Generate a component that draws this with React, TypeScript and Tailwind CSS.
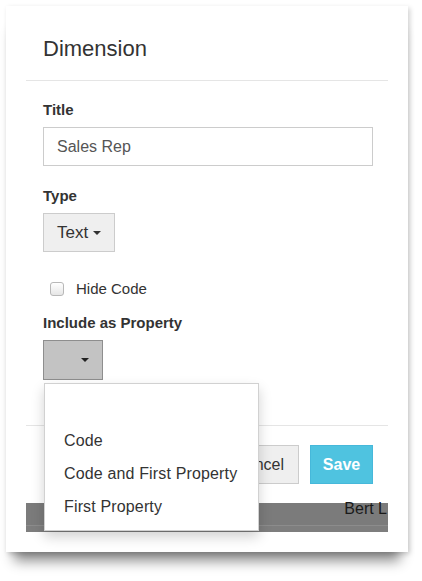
const caret = 'inline-block w-0 h-0 border-x-[4px] border-x-transparent border-t-[4px]'

function App() {
  const options = ['', 'Code', 'Code and First Property', 'First Property']

  return (
    <div className="w-[422px] h-[581px] bg-white pl-[6px] pt-[6px] font-['Liberation_Sans',Arial,sans-serif] text-[#333]">
      <div className="w-[402px] h-[546px] bg-white px-[20px] shadow-[2px_2px_5px_rgba(0,0,0,0.18),0_17px_12px_-8px_rgba(0,0,0,0.45)]">
        <section className="flex flex-col">
          <header className="pl-[17px] pt-[32px] pb-[20px] border-b border-[#e5e5e5]">
            <h4 className="text-[22px] leading-[22px]">Dimension</h4>
          </header>

          <form className="flex flex-col pl-[17px] pr-[15px] pt-[19px] pb-[45px]">
            <label className="text-[15px] leading-[20px] font-bold mb-[7px]">Title</label>
            <input
              defaultValue="Sales Rep"
              className="h-[39px] w-full border border-[#ccc] px-[13px] text-[16px] text-[#555] focus:outline-none"
            />

            <label className="text-[15px] leading-[20px] font-bold mt-[20px] mb-[7px]">Type</label>
            <button
              type="button"
              className="h-[39px] w-[72px] flex items-center gap-[5px] pl-[13px] border border-[#ccc] bg-[#efefef] text-[17px]"
            >
              Text
              <span className={`${caret} border-t-[#333]`} />
            </button>

            <div className="flex items-center gap-[12px] pl-[7px] mt-[27px] h-[20px]">
              <span className="w-[14px] h-[14px] rounded-[3px] border border-[#b8b8b8] bg-gradient-to-b from-white to-[#e6e6e6]" />
              <span className="text-[15px] leading-[20px]">Hide Code</span>
            </div>

            <label className="text-[15px] leading-[20px] font-bold mt-[14px] mb-[7px]">Include as Property</label>
            <div className="relative">
              <button
                type="button"
                className="h-[40px] w-[60px] flex items-center justify-end pr-[13px] border border-[#8e8e8e] bg-[#c3c3c3]"
              >
                <span className={`${caret} border-t-[#222]`} />
              </button>
              <ul className="absolute left-[1px] top-[43px] z-10 w-[215px] py-[7px] bg-white border border-[rgba(0,0,0,0.18)] shadow-[0_6px_12px_rgba(0,0,0,0.18)]">
                {options.map(o => (
                  <li key={o} className="h-[33px] flex items-center pl-[19px] text-[16px] tracking-[0.15px] whitespace-nowrap">
                    {o}
                  </li>
                ))}
              </ul>
            </div>
          </form>

          <footer className="flex justify-end gap-[11px] pr-[15px] pt-[19px] pb-[19px] border-t border-[#e5e5e5]">
            <button type="button" className="h-[39px] px-[14px] border border-[#ccc] bg-[#efefef] text-[16px]">
              Cancel
            </button>
            <button type="button" className="h-[39px] w-[63px] border border-[#46b8da] bg-[#4fc3e0] text-white text-[16px] font-bold">
              Save
            </button>
          </footer>
        </section>

        <div className="h-[29px] bg-[#7b7b7b] flex flex-col">
          <div className="h-[22px] flex justify-end pr-[1px]">
            <span className="-mt-[4px] text-[16px] leading-[20px] text-[#1a1a1a] whitespace-nowrap">Bert L</span>
          </div>
          <div className="h-[1px] bg-[#8c8c8c]" />
          <div className="flex-1 bg-[#7e7e7e]" />
        </div>
      </div>
    </div>
  )
}

export default App
